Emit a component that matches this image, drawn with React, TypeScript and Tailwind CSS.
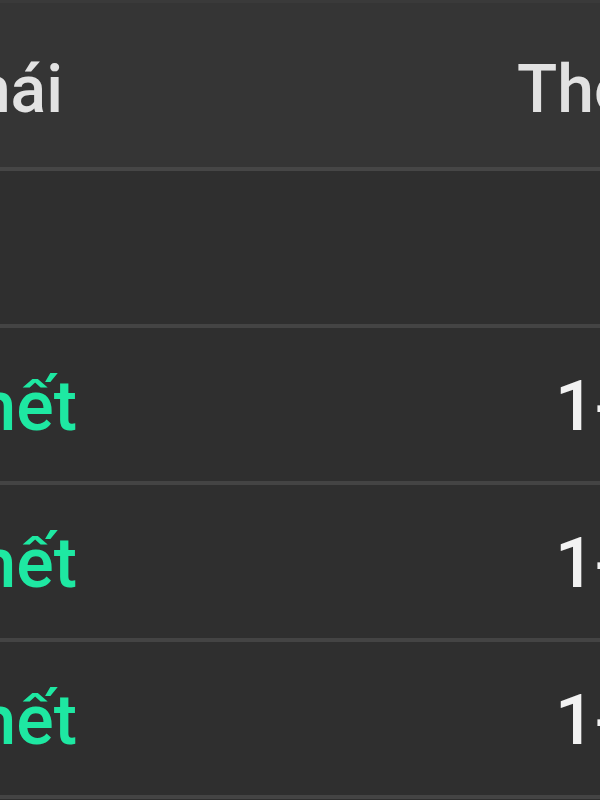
import React from 'react';

const rows = [
  { status: 'Đã hết', time: '1-3 ngày' },
  { status: 'Đã hết', time: '1-3 ngày' },
  { status: 'Đã hết', time: '1-3 ngày' },
];

export default function App() {
  return (
    <div
      className="w-[600px] h-[800px] overflow-hidden bg-[#2f2f2f]"
      style={{ fontFamily: 'Roboto, "Noto Sans", sans-serif' }}
    >
      {/* header */}
      <div className="flex h-[171px] bg-[#353535] border-t-[3px] border-t-[#3a3a3a] border-b-4 border-b-[#464646] text-[#e2e2e2] text-[66px] font-medium leading-none">
        <div className="w-[63px] shrink-0 flex justify-end pt-[54px] whitespace-nowrap">
          <span>Trạng thái</span>
        </div>
        <div className="flex-1" />
        <div className="w-[85px] shrink-0 pt-[54px] pl-[2px] whitespace-nowrap overflow-hidden">
          <span>Thời gian</span>
        </div>
      </div>

      {/* empty row */}
      <div className="h-[157px] border-b-4 border-[#444444]" />

      {rows.map((r, i) => (
        <div key={i} className="flex h-[157px] border-b-4 border-[#444444] text-[70px] font-medium leading-none">
          <div className="w-[77px] shrink-0 flex justify-end pt-[43px] whitespace-nowrap text-[#1ee8a2]">
            <span>{r.status}</span>
          </div>
          <div className="flex-1" />
          <div className="w-[45px] shrink-0 pt-[43px] whitespace-nowrap overflow-hidden text-[#f2f2f2]">
            <span>{r.time}</span>
          </div>
        </div>
      ))}
    </div>
  );
}
